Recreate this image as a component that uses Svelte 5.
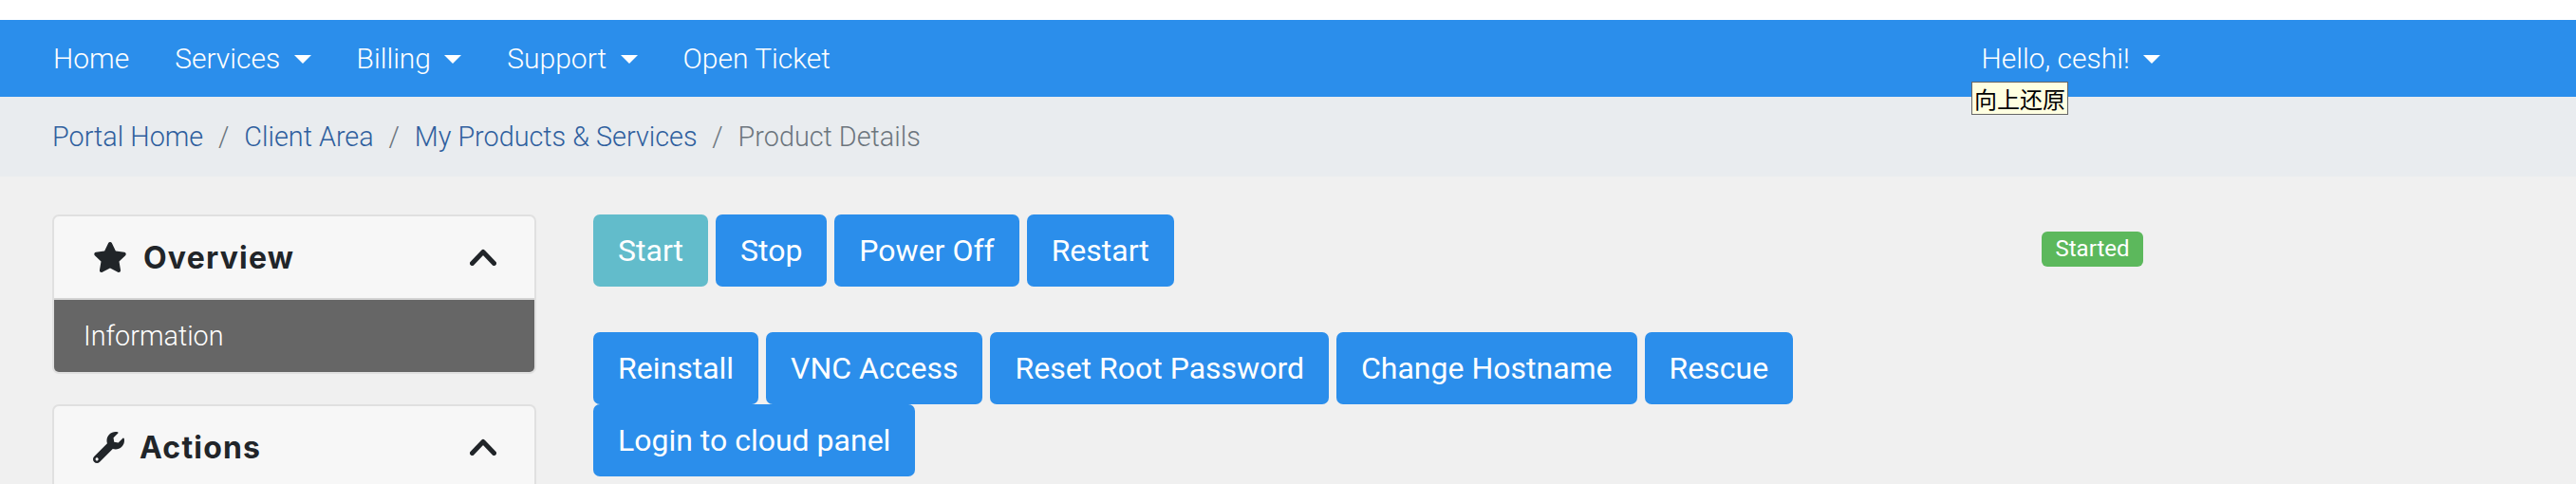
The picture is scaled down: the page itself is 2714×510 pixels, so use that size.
<script>
  const navLinks = [
    { label: "Home" },
    { label: "Services", caret: true },
    { label: "Billing", caret: true },
    { label: "Support", caret: true },
    { label: "Open Ticket" }
  ];
  const crumbs = ["Portal Home", "Client Area", "My Products & Services"];
  const powerButtons = ["Stop", "Power Off", "Restart"];
  const toolButtons = ["Reinstall", "VNC Access", "Reset Root Password", "Change Hostname", "Rescue", "Login to cloud panel"];
</script>

<div class="page">
  <nav class="topbar">
    {#each navLinks as link}
      <a class="navlink" href="#top">
        {link.label}
        {#if link.caret}<span class="caret"></span>{/if}
      </a>
    {/each}
    <a class="navlink user" href="#top">Hello, ceshi! <span class="caret"></span></a>
  </nav>

  <div class="breadcrumb">
    {#each crumbs as crumb}
      <a href="#top">{crumb}</a>
      <span class="sep">/</span>
    {/each}
    <span class="current">Product Details</span>
  </div>

  <main class="layout">
    <aside class="sidebar">
      <section class="card">
        <header class="card-head">
          <svg class="star" viewBox="0 0 576 512"><path d="M259.3 17.8L194 150.2 47.9 171.5c-26.2 3.8-36.7 36.1-17.7 54.6l105.7 103-25 145.5c-4.5 26.3 23.2 46 46.4 33.7L288 439.6l130.7 68.7c23.2 12.2 50.9-7.4 46.4-33.7l-25-145.5 105.7-103c19-18.5 8.5-50.8-17.7-54.6L382 150.2 316.7 17.8c-11.7-23.6-45.6-23.9-57.4 0z"/></svg>
          <h3>Overview</h3>
          <svg class="chevron" viewBox="0 0 28 18"><polyline points="2.5,15.5 14,3.5 25.5,15.5"/></svg>
        </header>
        <div class="card-item">Information</div>
      </section>

      <section class="card">
        <header class="card-head">
          <svg class="wrench" viewBox="0 0 512 512"><path d="M507.73 109.1c-2.24-9.03-13.54-12.09-20.12-5.51l-74.36 74.36-67.88-11.31-11.31-67.88 74.36-74.36c6.62-6.62 3.43-17.9-5.66-20.16-47.38-11.74-99.55.91-136.58 37.93-39.64 39.64-50.55 97.1-34.05 147.2L18.74 402.76c-24.99 24.99-24.99 65.51 0 90.5 24.99 24.99 65.51 24.99 90.5 0l213.21-213.21c50.12 16.71 107.47 5.68 147.37-34.22 37.07-37.07 49.7-89.32 37.91-136.73zM64 472c-13.25 0-24-10.75-24-24 0-13.26 10.75-24 24-24s24 10.74 24 24c0 13.25-10.75 24-24 24z"/></svg>
          <h3>Actions</h3>
          <svg class="chevron" viewBox="0 0 28 18"><polyline points="2.5,15.5 14,3.5 25.5,15.5"/></svg>
        </header>
      </section>
    </aside>

    <div class="content">
      <div class="power-row">
        <div class="buttons">
          <button class="btn start">Start</button>
          {#each powerButtons as b}
            <button class="btn">{b}</button>
          {/each}
        </div>
        <span class="badge">Started</span>
      </div>
      <div class="buttons tools">
        {#each toolButtons as b}
          <button class="btn">{b}</button>
        {/each}
      </div>
    </div>
  </main>

  <div class="tooltip">向上还原</div>
</div>

<style>
  :global(html), :global(body) {
    margin: 0;
    height: 510px;
    overflow: hidden;
  }

  .page {
    position: relative;
    height: 510px;
    overflow: hidden;
    padding-top: 21px;
    box-sizing: border-box;
    background: #fff;
    font-family: Roboto, "Liberation Sans", sans-serif;
  }

  .topbar {
    display: flex;
    align-items: center;
    height: 81px;
    padding: 0 414px 0 32px;
    background: #2b8eeb;
  }

  .navlink {
    padding: 0 24px;
    color: #fff;
    font-size: 30px;
    font-weight: 300;
    text-decoration: none;
    white-space: nowrap;
  }

  .user {
    margin-left: auto;
  }

  .caret {
    display: inline-block;
    margin-left: 7px;
    vertical-align: 5px;
    border-top: 9px solid #fff;
    border-left: 9px solid transparent;
    border-right: 9px solid transparent;
  }

  .breadcrumb {
    display: flex;
    align-items: center;
    height: 84px;
    padding-left: 55px;
    background: #e9ecef;
    font-size: 28.8px;
    font-weight: 300;
    white-space: nowrap;
  }

  .breadcrumb a {
    color: #2f5f9e;
    text-decoration: none;
  }

  .sep {
    padding: 0 15.8px;
    color: #6c757d;
  }

  .current {
    color: #6c757d;
  }

  .layout {
    display: flex;
    align-items: flex-start;
    gap: 60px;
    height: 324px;
    padding: 40px 0 0 55px;
    box-sizing: border-box;
    background: #f0f0f0;
  }

  .sidebar {
    display: flex;
    flex-direction: column;
    gap: 32px;
    flex: 0 0 510px;
  }

  .card {
    border: 2px solid #e0e0e0;
    border-radius: 7px;
    background: #f7f7f7;
    overflow: hidden;
  }

  .card-head {
    display: flex;
    align-items: center;
    height: 86px;
    padding: 0 40px 0 41px;
    border-bottom: 2px solid #d4d4d4;
    color: #212529;
  }

  .card-head h3 {
    margin: 0;
    font-family: Inter, "Open Sans", sans-serif;
    font-size: 32px;
    font-weight: 700;
    letter-spacing: 1.2px;
  }

  .star {
    width: 36px;
    height: 32px;
    margin-right: 17px;
    fill: #212529;
  }

  .wrench {
    width: 33px;
    height: 33px;
    margin-right: 16px;
    fill: #212529;
  }

  .chevron {
    width: 28px;
    height: 18px;
    margin-left: auto;
    fill: none;
    stroke: #212529;
    stroke-width: 5;
    stroke-linecap: round;
    stroke-linejoin: round;
  }

  .card-item {
    height: 76px;
    padding-left: 31px;
    line-height: 76px;
    background: #666;
    color: #fff;
    font-size: 28.8px;
    font-weight: 300;
  }

  .content {
    flex: 0 0 1633px;
  }

  .power-row {
    display: flex;
    justify-content: space-between;
    align-items: flex-start;
  }

  .buttons {
    display: flex;
    flex-wrap: wrap;
    gap: 0 8px;
  }

  .tools {
    width: 1300px;
    margin-top: 48px;
  }

  .btn {
    height: 76px;
    padding: 0 26px;
    border: 0;
    border-radius: 7px;
    background: #2b8eeb;
    color: #fff;
    font-family: inherit;
    font-size: 32px;
    font-weight: 400;
  }

  .start {
    background: #62bccb;
  }

  .badge {
    margin-top: 18px;
    height: 37px;
    width: 107px;
    border-radius: 6px;
    background: #5cb85c;
    color: #fff;
    font-size: 24px;
    font-weight: 400;
    line-height: 37px;
    text-align: center;
  }

  .tooltip {
    position: absolute;
    left: 2077px;
    top: 86px;
    width: 102px;
    height: 35px;
    box-sizing: border-box;
    border: 1px solid #666;
    background: #ffffe1;
    color: #000;
    font-family: "Noto Sans CJK SC", sans-serif;
    font-size: 24px;
    font-weight: 400;
    line-height: 33px;
    text-align: center;
    white-space: nowrap;
  }
</style>
